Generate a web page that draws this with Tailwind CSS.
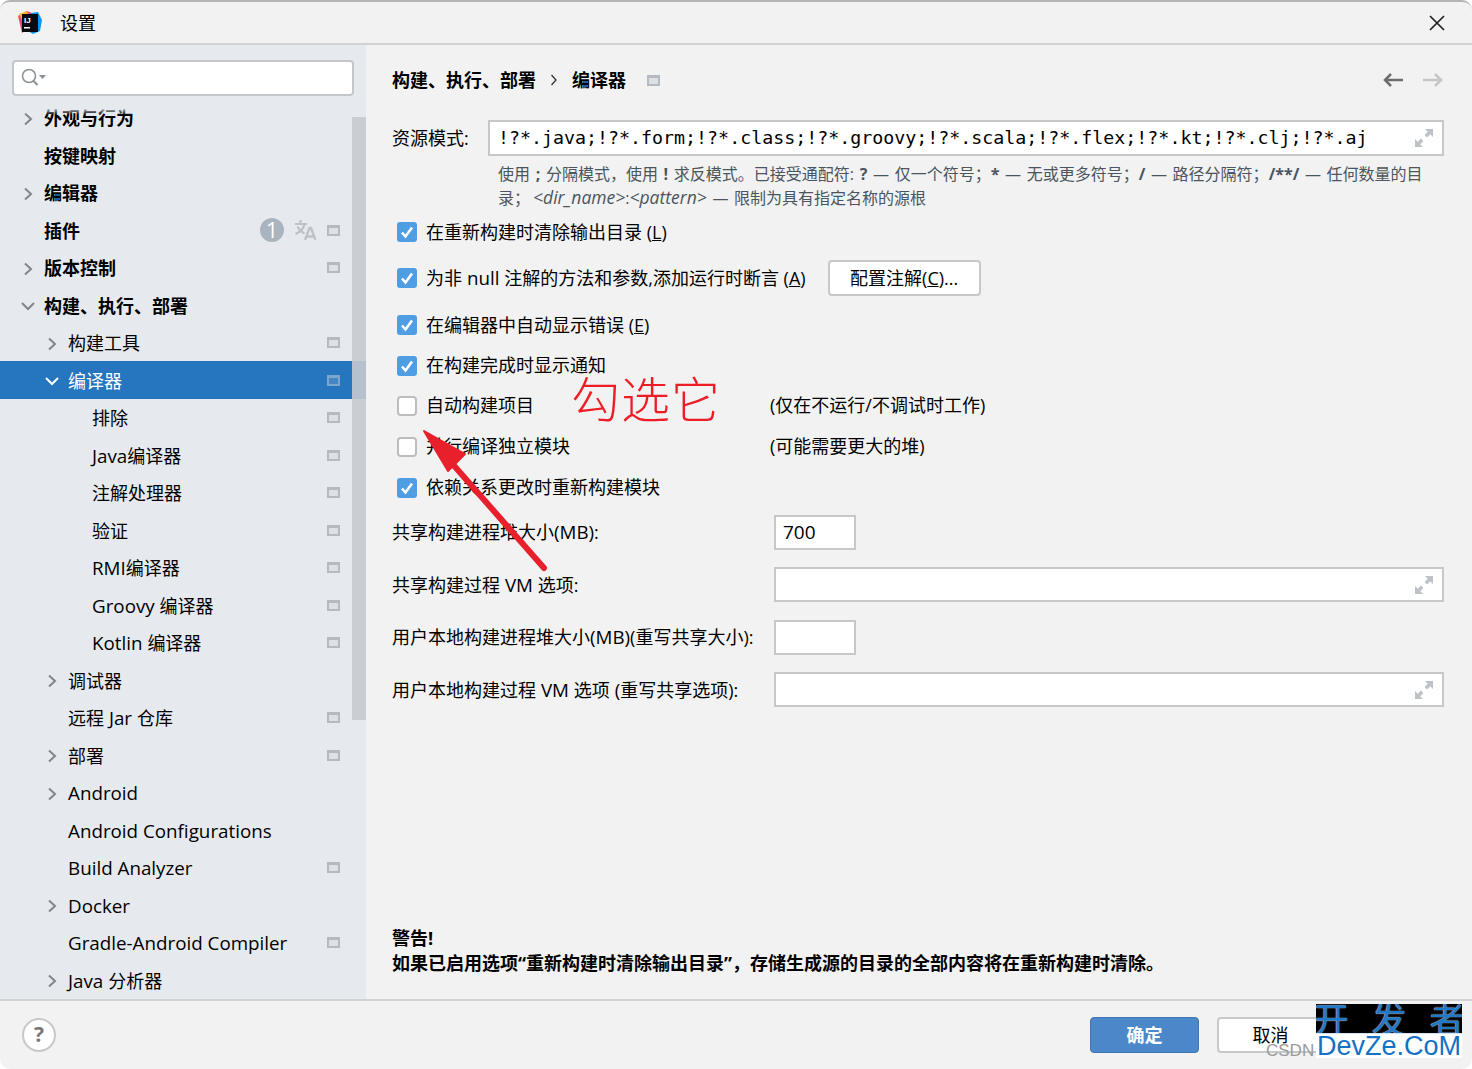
<!DOCTYPE html>
<html lang="zh-CN">
<head>
  <meta charset="UTF-8" />
  <title>设置</title>
  <script src="https://cdn.jsdelivr.net/npm/@tailwindcss/browser@4"></script>
</head>
<body class="bg-white">
<svg class="hidden">
  <symbol id="cfg" viewBox="0 0 13 13"><rect width="13" height="11" fill="#b4bac0"/><rect x="2" y="3" width="9" height="6" fill="#dde1e5"/></symbol>
  <symbol id="right" viewBox="0 0 10 14"><path d="M2 1.5 8 7l-6 5.5" fill="none" stroke="#808589" stroke-width="2"/></symbol>
  <symbol id="down" viewBox="0 0 14 10"><path d="M1 2l6 6 6-6" fill="none" stroke="#808589" stroke-width="2"/></symbol>
  <symbol id="check" viewBox="0 0 20 20"><rect width="20" height="20" rx="3" fill="#4f9ee3"/><path d="M5 10.5l3.5 4L15 5.5" fill="none" stroke="#fff" stroke-width="2.6"/></symbol>
  <symbol id="expand" viewBox="0 0 20 20"><path d="M11 1h8v8l-2.800-2.800-3.200 3.200-2.400-2.400 3.200-3.200zM9 19H1v-8l2.800 2.800 3.200-3.200 2.400 2.400-3.200 3.200z" fill="#bcc2c8"/></symbol>
</svg>

<div class="relative w-[1472px] h-[1069px] overflow-hidden rounded-[10px] bg-[#f2f2f2] border-t-2 border-[#b4b4b4] text-[18px] text-black font-['Open_Sans','Noto_Sans_CJK_SC',sans-serif] flex flex-col">

  <!-- title bar -->
  <div class="h-[43px] shrink-0 flex items-center border-b-2 border-[#d2d2d2] pl-[18px] pr-[26px]">
    <svg class="w-[24px] h-[24px]" viewBox="0 0 24 24">
      <path d="M0 5 9 0l7 3-3 13-9 6z" fill="#fc3d7c"/>
      <path d="M1 3 9 0l3 8-7 3z" fill="#fdb62c"/>
      <path d="M13 2l7-1 4 8-2 11-7 3-5-3z" fill="#0d95ea"/>
      <rect x="4" y="3" width="16" height="18" fill="#0b0b0f"/>
      <text x="6" y="12" fill="#fff" font-size="8" font-weight="700" font-family="Liberation Sans">IJ</text>
      <rect x="6" y="16" width="6" height="1.5" fill="#fff"/>
    </svg>
    <span class="ml-[18px] pt-[1px]">设置</span>
    <svg class="ml-auto w-[18px] h-[18px]" viewBox="0 0 18 18"><path d="M2 2l14 14M16 2 2 16" stroke="#222" stroke-width="1.7"/></svg>
  </div>

  <div class="flex flex-1 min-h-0">
    <!-- sidebar -->
    <aside class="relative w-[366px] shrink-0 bg-[#e6eaee] overflow-hidden">
      <div class="h-[53.8px] pt-[15px] px-[12px]">
        <div class="h-[36px] bg-white border-2 border-[#c4c7ca] rounded-[4px] flex items-center pl-[7px]">
          <svg class="w-[26px] h-[20px]" viewBox="0 0 26 20"><circle cx="8" cy="8" r="6.5" fill="none" stroke="#8a9096" stroke-width="1.5"/><path d="M12.5 13l4 4" stroke="#8a9096" stroke-width="2"/><path d="M18 7h7l-3.5 4z" fill="#8a9096"/></svg>
        </div>
      </div>
      <div class="absolute left-0 right-[14px] top-[62px] h-[8px] bg-gradient-to-b from-[#e6eaee] to-[#e6eaee]/0 z-10"></div>

      <ul>
        <li class="h-[37.5px] pt-[2px] flex items-center pl-[23px] pr-[26px]"><svg class="w-[10px] h-[14px]"><use href="#right"/></svg><span class="ml-[11px] font-bold">外观与行为</span></li>
        <li class="h-[37.5px] pt-[2px] flex items-center pl-[44px] pr-[26px]"><span class="font-bold">按键映射</span></li>
        <li class="h-[37.5px] pt-[2px] flex items-center pl-[23px] pr-[26px]"><svg class="w-[10px] h-[14px]"><use href="#right"/></svg><span class="ml-[11px] font-bold">编辑器</span></li>
        <li class="h-[37.5px] pt-[2px] flex items-center pl-[44px] pr-[26px]">
          <span class="font-bold">插件</span>
          <span class="ml-auto mb-[2px] w-[24px] h-[24px] rounded-full bg-[#a9b4be] text-white text-[21px] font-normal leading-[24px] text-center">1</span>
          <svg class="ml-[10px] mb-[2px] w-[22px] h-[20px]" viewBox="0 0 22 20"><path d="M1 4h12M6.5 0v4M10.5 4c-1 5-4 8-9 10M3.5 6.5c1.5 3 4 5.5 7 7" fill="none" stroke="#bcc2c8" stroke-width="2.2"/><path d="M11 20l4.500-12h1.500l4.500 12M12.5 16.5h7.5" fill="none" stroke="#bcc2c8" stroke-width="2.4"/></svg>
          <svg class="ml-[11px] w-[13px] h-[13px]"><use href="#cfg"/></svg>
        </li>
        <li class="h-[37.5px] pt-[2px] flex items-center pl-[23px] pr-[26px]"><svg class="w-[10px] h-[14px]"><use href="#right"/></svg><span class="ml-[11px] font-bold">版本控制</span><svg class="ml-auto w-[13px] h-[13px]"><use href="#cfg"/></svg></li>
        <li class="h-[37.5px] pt-[2px] flex items-center pl-[21px] pr-[26px]"><svg class="w-[14px] h-[10px]"><use href="#down"/></svg><span class="ml-[9px] font-bold">构建、执行、部署</span></li>
        <li class="h-[37.5px] pt-[2px] flex items-center pl-[47px] pr-[26px]"><svg class="w-[10px] h-[14px]"><use href="#right"/></svg><span class="ml-[11px]">构建工具</span><svg class="ml-auto w-[13px] h-[13px]"><use href="#cfg"/></svg></li>
        <li class="h-[37.5px] pt-[2px] flex items-center pl-[45px] pr-[26px] bg-[#2675bf] text-white"><svg class="w-[14px] h-[10px]" viewBox="0 0 14 10"><path d="M1 2l6 6 6-6" fill="none" stroke="#fff" stroke-width="2"/></svg><span class="ml-[9px]">编译器</span><svg class="ml-auto w-[13px] h-[13px]" viewBox="0 0 13 13"><rect width="13" height="11" fill="#7da6cf"/><rect x="2" y="3" width="9" height="6" fill="#4685c4"/></svg></li>
        <li class="h-[37.5px] pt-[2px] flex items-center pl-[92px] pr-[26px]"><span>排除</span><svg class="ml-auto w-[13px] h-[13px]"><use href="#cfg"/></svg></li>
        <li class="h-[37.5px] pt-[2px] flex items-center pl-[92px] pr-[26px]"><span><span class="text-[18.8px]">Java</span>编译器</span><svg class="ml-auto w-[13px] h-[13px]"><use href="#cfg"/></svg></li>
        <li class="h-[37.5px] pt-[2px] flex items-center pl-[92px] pr-[26px]"><span>注解处理器</span><svg class="ml-auto w-[13px] h-[13px]"><use href="#cfg"/></svg></li>
        <li class="h-[37.5px] pt-[2px] flex items-center pl-[92px] pr-[26px]"><span>验证</span><svg class="ml-auto w-[13px] h-[13px]"><use href="#cfg"/></svg></li>
        <li class="h-[37.5px] pt-[2px] flex items-center pl-[92px] pr-[26px]"><span><span class="text-[18.8px]">RMI</span>编译器</span><svg class="ml-auto w-[13px] h-[13px]"><use href="#cfg"/></svg></li>
        <li class="h-[37.5px] pt-[2px] flex items-center pl-[92px] pr-[26px]"><span><span class="text-[18.8px]">Groovy </span>编译器</span><svg class="ml-auto w-[13px] h-[13px]"><use href="#cfg"/></svg></li>
        <li class="h-[37.5px] pt-[2px] flex items-center pl-[92px] pr-[26px]"><span><span class="text-[18.8px]">Kotlin </span>编译器</span><svg class="ml-auto w-[13px] h-[13px]"><use href="#cfg"/></svg></li>
        <li class="h-[37.5px] pt-[2px] flex items-center pl-[47px] pr-[26px]"><svg class="w-[10px] h-[14px]"><use href="#right"/></svg><span class="ml-[11px]">调试器</span></li>
        <li class="h-[37.5px] pt-[2px] flex items-center pl-[68px] pr-[26px]"><span>远程<span class="text-[18.8px]"> Jar </span>仓库</span><svg class="ml-auto w-[13px] h-[13px]"><use href="#cfg"/></svg></li>
        <li class="h-[37.5px] pt-[2px] flex items-center pl-[47px] pr-[26px]"><svg class="w-[10px] h-[14px]"><use href="#right"/></svg><span class="ml-[11px]">部署</span><svg class="ml-auto w-[13px] h-[13px]"><use href="#cfg"/></svg></li>
        <li class="h-[37.5px] pt-[2px] flex items-center pl-[47px] pr-[26px]"><svg class="w-[10px] h-[14px]"><use href="#right"/></svg><span class="ml-[11px] text-[18.8px]">Android</span></li>
        <li class="h-[37.5px] pt-[2px] flex items-center pl-[68px] pr-[26px] text-[18.8px]">Android Configurations</li>
        <li class="h-[37.5px] pt-[2px] flex items-center pl-[68px] pr-[26px] text-[18.8px]"><span>Build Analyzer</span><svg class="ml-auto w-[13px] h-[13px]"><use href="#cfg"/></svg></li>
        <li class="h-[37.5px] pt-[2px] flex items-center pl-[47px] pr-[26px]"><svg class="w-[10px] h-[14px]"><use href="#right"/></svg><span class="ml-[11px] text-[18.8px]">Docker</span></li>
        <li class="h-[37.5px] pt-[2px] flex items-center pl-[68px] pr-[26px] text-[18.8px]"><span>Gradle-Android Compiler</span><svg class="ml-auto w-[13px] h-[13px]"><use href="#cfg"/></svg></li>
        <li class="h-[37.5px] pt-[2px] flex items-center pl-[47px] pr-[26px]"><svg class="w-[10px] h-[14px]"><use href="#right"/></svg><span class="ml-[11px]"><span class="text-[18.8px]">Java </span>分析器</span></li>
      </ul>
      <!-- scrollbar -->
      <div class="absolute right-0 top-[72px] w-[14px] h-[603px] bg-[#c6cace]/90"></div>
    </aside>

    <!-- content -->
    <main class="flex-1 min-w-0 pl-[26px] pr-[28px] flex flex-col">
      <div class="h-[70px] shrink-0 flex items-center">
        <span class="font-bold">构建、执行、部署</span>
        <svg class="ml-[14px] w-[8px] h-[12px]" viewBox="0 0 8 12"><path d="M1.5 1 6 6l-4.500 5" fill="none" stroke="#333" stroke-width="1.3"/></svg>
        <span class="ml-[14px] font-bold">编译器</span>
        <svg class="ml-[21px] mt-[2px] w-[13px] h-[13px]"><use href="#cfg"/></svg>
        <svg class="ml-auto w-[20px] h-[16px]" viewBox="0 0 20 16"><path d="M20 8H1.5M8 2 2 8l6 6" fill="none" stroke="#6e6e6e" stroke-width="2.5"/></svg>
        <svg class="ml-[20px] mr-[1px] w-[20px] h-[16px]" viewBox="0 0 20 16"><path d="M0 8h18.5M12 2l6 6-6 6" fill="none" stroke="#c6c6c6" stroke-width="2.5"/></svg>
      </div>

      <div class="flex items-center h-[36px] shrink-0 mt-[5px]">
        <span class="w-[96px] shrink-0">资源模式:</span>
        <div class="flex-1 h-[36px] bg-white border-2 border-[#c8c8c8] flex items-center pl-[8px] pr-[8px] font-['DejaVu_Sans_Mono',monospace] text-[18.3px]">
          <span>!?*.java;!?*.form;!?*.class;!?*.groovy;!?*.scala;!?*.flex;!?*.kt;!?*.clj;!?*.aj</span>
          <svg class="ml-auto w-[20px] h-[20px]"><use href="#expand"/></svg>
        </div>
      </div>
      <p class="mt-[7px] ml-[106px] text-[16px] leading-[23px] text-[#4a5560] h-[49px] shrink-0 [word-spacing:1.5px] whitespace-nowrap">使用 <b>;</b> 分隔模式，使用 <b>!</b> 求反模式。已接受通配符: <b>?</b> — 仅一个符号；<b>*</b> — 无或更多符号；<b>/</b> — 路径分隔符；<b>/**/</b> — 任何数量的目<br>录；<i class="ml-[3px] text-[17.5px]">&lt;dir_name&gt;</i>:<i class="text-[17.5px]">&lt;pattern&gt;</i> — 限制为具有指定名称的源根</p>

      <div class="h-[40px] shrink-0 flex items-center pl-[5px]"><svg class="w-[20px] h-[20px]"><use href="#check"/></svg><span class="ml-[9px]">在重新构建时清除输出目录 (<u>L</u>)</span></div>
      <div class="h-[52px] shrink-0 flex items-center pl-[5px]">
        <svg class="w-[20px] h-[20px]"><use href="#check"/></svg><span class="ml-[9px]">为非<span class="text-[18.8px]"> null </span>注解的方法和参数,添加运行时断言 (<u>A</u>)</span>
        <button class="ml-[22px] w-[153px] h-[36px] bg-white border-2 border-[#c8c8c8] rounded-[4px]">配置注解(<u>C</u>)...</button>
      </div>
      <div class="h-[42px] shrink-0 flex items-center pl-[5px]"><svg class="w-[20px] h-[20px]"><use href="#check"/></svg><span class="ml-[9px]">在编辑器中自动显示错误 (<u>E</u>)</span></div>
      <div class="h-[39px] shrink-0 flex items-center pl-[5px]"><svg class="w-[20px] h-[20px]"><use href="#check"/></svg><span class="ml-[9px]">在构建完成时显示通知</span></div>
      <div class="h-[41px] shrink-0 flex items-center pl-[5px]"><span class="w-[20px] h-[20px] bg-white border-2 border-[#bdbdbd] rounded-[4px]"></span><span class="ml-[9px]">自动构建项目</span><span class="absolute left-[770px]">(仅在不运行/不调试时工作)</span></div>
      <div class="h-[41px] shrink-0 flex items-center pl-[5px]"><span class="w-[20px] h-[20px] bg-white border-2 border-[#bdbdbd] rounded-[4px]"></span><span class="ml-[9px]">并行编译独立模块</span><span class="absolute left-[770px]">(可能需要更大的堆)</span></div>
      <div class="h-[41px] shrink-0 flex items-center pl-[5px]"><svg class="w-[20px] h-[20px]"><use href="#check"/></svg><span class="ml-[9px]">依赖关系更改时重新构建模块</span></div>

      <div class="grid grid-cols-[382px_1fr] auto-rows-[35px] gap-y-[17.5px] mt-[6.7px] items-center shrink-0">
        <span>共享构建进程堆大小<span class="text-[18.8px]">(MB)</span>:</span>
        <div class="w-[82px] h-[35px] bg-white border-2 border-[#c8c8c8] pl-[7px] text-[19px] leading-[31px]">700</div>
        <span>共享构建过程<span class="text-[18.8px]"> VM </span>选项:</span>
        <div class="h-[35px] bg-white border-2 border-[#c8c8c8] flex items-center justify-end pr-[8px]"><svg class="w-[20px] h-[20px]"><use href="#expand"/></svg></div>
        <span>用户本地构建进程堆大小<span class="text-[18.8px]">(MB)</span>(重写共享大小):</span>
        <div class="w-[82px] h-[35px] bg-white border-2 border-[#c8c8c8]"></div>
        <span>用户本地构建过程<span class="text-[18.8px]"> VM </span>选项<span class="text-[18.8px]"> (</span>重写共享选项):</span>
        <div class="h-[35px] bg-white border-2 border-[#c8c8c8] flex items-center justify-end pr-[8px]"><svg class="w-[20px] h-[20px]"><use href="#expand"/></svg></div>
      </div>

      <div class="mt-auto pb-[23px] font-bold leading-[25px]">
        <p>警告!</p>
        <p>如果已启用选项“重新构建时清除输出目录”，存储生成源的目录的全部内容将在重新构建时清除。</p>
      </div>
    </main>
  </div>

  <!-- footer -->
  <footer class="h-[70px] shrink-0 border-t-2 border-[#d2d2d2] flex items-center pl-[22px] pr-[146px]">
    <span class="w-[34px] h-[34px] rounded-full bg-white border-2 border-[#c8c8c8] text-[#777] font-bold text-[21px] flex items-center justify-center">?</span>
    <button class="ml-auto w-[109px] h-[36px] bg-[#4c88c9] border border-[#3d76b3] rounded-[4px] text-white font-bold">确定</button>
    <button class="ml-[18px] w-[109px] h-[36px] bg-white border-2 border-[#c8c8c8] rounded-[4px] pr-[2px]">取消</button>
  </footer>

  <!-- 截图上的标注 -->
  <div class="absolute left-[571px] top-[367px] text-[49px] leading-[60px] tracking-[1px] font-extralight text-[#ee1c25] whitespace-nowrap">勾选它</div>
  <svg class="absolute left-[420px] top-[424px]" width="135" height="148" viewBox="0 0 135 148"><path d="M124 142 22 26" stroke="#e8202c" stroke-width="6" stroke-linecap="round"/><path d="M4 5 45 28 28 45z" fill="#e8202c" stroke="#e8202c" stroke-width="2" stroke-linejoin="round"/></svg>
  <div class="absolute left-[1266px] top-[1039px] text-[17px] leading-[20px] text-[#9a9a9a] font-['Liberation_Sans',sans-serif]">CSDN</div>
  <div class="absolute left-[1316px] top-[1002px] w-[146px] h-[54px] bg-black flex flex-col">
    <div class="h-[30px] flex justify-between items-center px-[1px] text-[#1f78c8] text-[28px] leading-[28px] border-b border-[#cfe4f6] overflow-hidden [text-shadow:0_0_1px_#fff]"><span class="scale-125">开</span><span class="scale-125">发</span><span class="scale-125">者</span></div>
    <div class="h-[24px] bg-white text-[#1471c4] text-[27px] leading-[24px] text-center font-['Liberation_Sans',sans-serif] whitespace-nowrap">DevZe.CoM</div>
  </div>
</div>
</body>
</html>
